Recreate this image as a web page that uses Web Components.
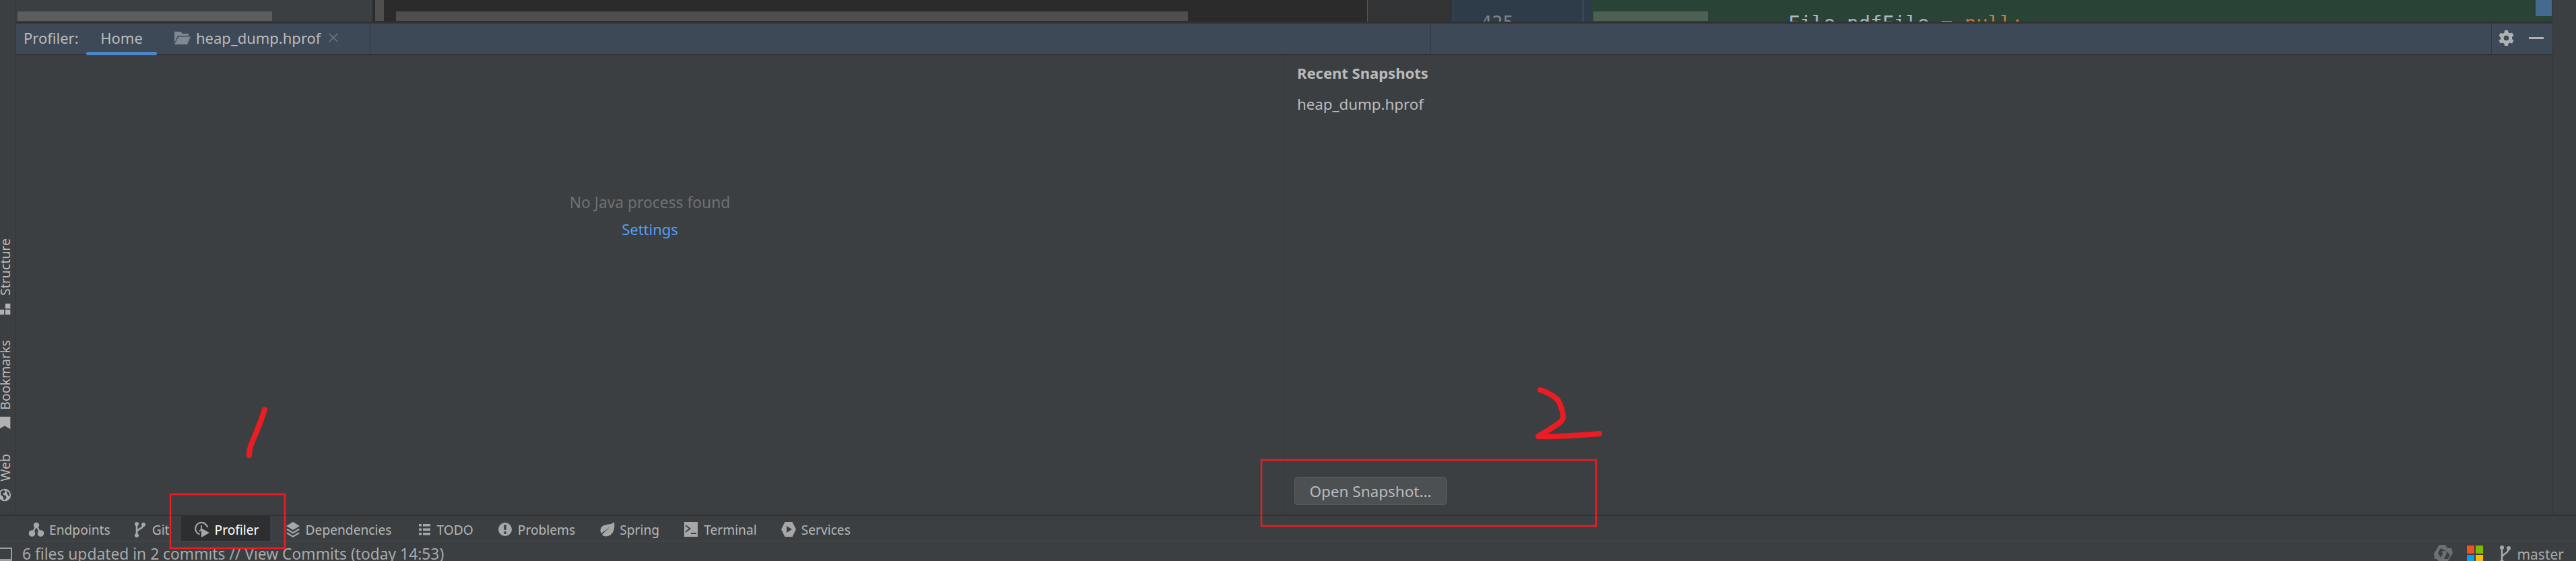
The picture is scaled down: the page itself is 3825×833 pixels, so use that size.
<!DOCTYPE html>
<html>
<head>
<meta charset="utf-8">
<title>Profiler</title>
<style>
  html, body { margin: 0; height: 100%; background: #3c3f41; overflow: hidden; }
  body { font-family: "Noto Sans", "Open Sans", sans-serif; color: #bbbbbb; }
</style>
</head>
<body>
<ide-window>
  <editor-strip slot="top"></editor-strip>
  <stripe-button slot="left" label="Structure" icon="structure"></stripe-button>
  <stripe-button slot="left" label="Bookmarks" icon="bookmark"></stripe-button>
  <stripe-button slot="left" label="Web" icon="web"></stripe-button>
  <tool-header slot="header"></tool-header>
  <profiler-home slot="content"></profiler-home>
  <tool-bar slot="toolbar">
    <tool-button icon="endpoints" style="--pad-l:42px;--pad-r:14px">Endpoints</tool-button>
    <tool-button icon="git" style="--pad-l:17px;--pad-r:17px">Git</tool-button>
    <tool-button icon="profiler" active style="--pad-l:19px;--pad-r:16px">Profiler</tool-button>
    <tool-button icon="layers" style="--pad-l:22px;--pad-r:18px">Dependencies</tool-button>
    <tool-button icon="todo" style="--pad-l:18px;--pad-r:17px">TODO</tool-button>
    <tool-button icon="problems" style="--pad-l:18px;--pad-r:16px">Problems</tool-button>
    <tool-button icon="spring" style="--pad-l:19px;--pad-r:17px">Spring</tool-button>
    <tool-button icon="terminal" style="--pad-l:18px;--pad-r:16px">Terminal</tool-button>
    <tool-button icon="services" style="--pad-l:19px;--pad-r:0px">Services</tool-button>
  </tool-bar>
  <status-bar slot="status"></status-bar>
</ide-window>
<ink-marks></ink-marks>

<script>
// shared icon paths, all drawn on a 24 box
const ICONS = {
  structure: '<path d="M13 2h9v9h-9zM13 13h9v9h-9zM1 13h10v9H1z"/>',
  bookmark: '<path d="M2 1h20v22l-10-6-10 6z"/>',
  web: '<path fill-rule="evenodd" d="M12 1a11 11 0 1 0 0 22 11 11 0 0 0 0-22zM5 6l5-3 3 2-1 3-3 1 1 3 4 1 1 4-3 4-2-1-1-5-4-3zM15 4l5 4 1 6-3-1-2-4z"/>',
  endpoints: '<g fill="none" stroke="currentColor" stroke-width="2.4"><path d="M12 6 6 18M12 6l6 12"/></g><circle cx="12" cy="6" r="4.2"/><circle cx="5.5" cy="18" r="4.8"/><circle cx="18.5" cy="18" r="4.8"/>',
  git: '<g fill="none" stroke="currentColor" stroke-width="2.6"><path d="M8 4v17M18 5c0 7-10 5-10 12"/></g><circle cx="8" cy="4" r="3"/><circle cx="18" cy="5" r="3"/><circle cx="8" cy="21" r="3"/>',
  profiler: '<g fill="none" stroke="currentColor" stroke-width="2.2"><path d="M8.5 19.5A9 9 0 1 1 20 9"/><path d="M11 6v6l-3 3" stroke-width="1.8"/></g><path d="M11 10.5 23 17l-12 7z"/>',
  layers: '<path d="M12 1 22 7l-10 6L2 7z"/><path d="M4 11l8 5 8-5 2 1.500-10 6-10-6zM4 16.500l8 5 8-5 2 1.500-10 6-10-6z"/>',
  todo: '<path d="M4 4h4v3.500H4zM10 4h11v3.500H10zM4 10.500h4V14H4zM10 10.500h11V14H10zM4 17h4v3.500H4zM10 17h11v3.500H10z"/>',
  problems: '<path fill-rule="evenodd" d="M12 2a10 10 0 1 0 0 20 10 10 0 0 0 0-20zM10 5.500h4l-.6 7.500h-2.800zM12 15a2 2 0 1 1 0 4 2 2 0 0 1 0-4z"/>',
  spring: '<path d="M23 1c1 8 0 15-5 19-4 3-9 3-12 1l-1-1C10 14 14 12 16 8 13 12 9 14 4 18 1 13 3 8 8 6c6-2 12-1 15-5z"/>',
  terminal: '<path fill-rule="evenodd" d="M2 1h20v22H2zM4 5v2.500L9 11l-5 3.500V17l8-6zM12 17v2h8v-2z"/>',
  services: '<path fill-rule="evenodd" d="M6.500 1h11L23 12l-5.500 11h-11L1 12zM9 7v10l8-5z"/>'
};

function icon(name) {
  return `<svg viewBox="0 0 24 24" fill="currentColor" aria-hidden="true">${ICONS[name] || ''}</svg>`;
}

class IdeWindow extends HTMLElement {
  constructor() {
    super();
    this.attachShadow({ mode: 'open' }).innerHTML = `
      <style>
        :host { display: flex; flex-direction: column; width: 3825px; height: 833px; overflow: hidden; }
        .top { flex: 0 0 32px; display: flex; }
        .middle { flex: none; display: flex; border-top: 3px solid #323232; height: 729px; }
        .left {
          flex: 0 0 23px; border-right: 1px solid #323538; overflow: hidden;
          display: flex; flex-direction: column; justify-content: flex-end; padding-bottom: 19px;
          margin-top: -3px; background: #3c3f41; position: relative;
        }
        .center { flex: 1; display: flex; flex-direction: column; min-width: 0; }
        .right { flex: 0 0 34px; border-left: 1px solid #323538; margin-top: -3px; background: #3c3f41; position: relative; }
        .toolbar { flex: 0 0 37px; border-top: 2px solid #323232; border-bottom: 1px solid #46494b; }
        .status { flex: 1; min-height: 0; }
      </style>
      <div class="top"><slot name="top"></slot></div>
      <div class="middle">
        <div class="left"><slot name="left"></slot></div>
        <div class="center">
          <slot name="header"></slot>
          <slot name="content"></slot>
        </div>
        <div class="right"></div>
      </div>
      <div class="toolbar"><slot name="toolbar"></slot></div>
      <div class="status"><slot name="status"></slot></div>
    `;
  }
}

// sliver of the editor still visible above the tool window
class EditorStrip extends HTMLElement {
  constructor() {
    super();
    this.attachShadow({ mode: 'open' }).innerHTML = `
      <style>
        :host { display: flex; width: 100%; height: 32px; overflow: hidden; }
        .seg { flex: none; height: 32px; display: flex; align-items: flex-start; overflow: hidden; box-sizing: border-box; }
        .thumb { flex: none; margin-top: 17px; height: 14px; }
        .code { font: 29px/1 "DejaVu Sans Mono", "Liberation Mono", monospace; color: #a9b7c6; white-space: pre; padding-top: 20px; }
        .code b { font-weight: normal; color: #cc7832; }
        .num { font: 27px/1 "DejaVu Sans Mono", monospace; color: #7d8289; padding: 20px 0 0 41px; }
      </style>
      <div class="seg" style="width:24px;border-right:1px solid #323538;background:#3c3f41"></div>
      <div class="seg" style="width:529px;background:#3c3f41">
        <div class="thumb" style="margin-left:2px;width:378px;background:#5b5d5f"></div>
      </div>
      <div class="seg" style="width:1477px;background:#2b2b2b;padding-left:4px">
        <div style="flex:none;width:13px;height:31px;background:#4e4e4e"></div>
        <div class="thumb" style="margin-left:18px;width:1176px;background:#4e4e4e"></div>
      </div>
      <div class="seg" style="width:127px;background:#313335;border-left:1px solid #555"></div>
      <div class="seg" style="width:194px;background:#2e3b49;border-left:1px solid #3a5a7c;border-right:1px solid #666">
        <div class="num">425</div>
      </div>
      <div class="seg" style="width:12px;background:#2e3b49"></div>
      <div class="seg" style="width:1426px;background:#294436;padding-left:3px">
        <div class="thumb" style="width:170px;background:#4c6152"></div>
        <div class="code" style="margin-left:119px">File pdfFile = <b>null;</b></div>
        <div style="flex:none;margin-left:auto;width:24px;height:24px;background:#456a90"></div>
      </div>
      <div class="seg" style="flex:1;background:#3c3f41;border-left:1px solid #323538"></div>
    `;
  }
}

class ToolHeader extends HTMLElement {
  constructor() {
    super();
    this.attachShadow({ mode: 'open' }).innerHTML = `
      <style>
        :host {
          display: flex; align-items: stretch; height: 47px; box-sizing: border-box; flex: none;
          background: #3d4957; border-bottom: 2px solid #323232; font-size: 22px; color: #bbbbbb;
        }
        .tabs { flex: 0 0 525px; display: flex; }
        .title { flex: 0 0 104px; padding-left: 11px; line-height: 42px; box-sizing: border-box; white-space: nowrap; }
        .tab { flex: none; position: relative; display: flex; align-items: center; height: 45px; padding-bottom: 3px; box-sizing: border-box; }
        .home { width: 105px; justify-content: center; }
        .home::after {
          content: ""; position: absolute; left: 0; right: 0; bottom: -2px; height: 5px;
          background: #4a88c7; border-radius: 3px;
        }
        .file { margin-left: 26px; gap: 8px; }
        .file svg { width: 24px; height: 19px; color: #7f8791; }
        .file .close { width: 14px; height: 14px; margin-left: 4px; color: #6f7883; }
        .split { flex: 0 0 1px; background: #323940; }
        .cell { flex: 0 0 1574px; }
        .tools { flex: 1; display: flex; align-items: center; padding-bottom: 3px; box-sizing: border-box; }
        .gear { flex: none; width: 23px; height: 23px; margin-left: 10px; color: #afb1b3; }
        .min { flex: none; width: 22px; height: 3px; margin-left: 22px; background: #afb1b3; }
      </style>
      <div class="tabs">
        <div class="title">Profiler:</div>
        <div class="tab home">Home</div>
        <div class="tab file">
          <svg viewBox="0 0 24 19" fill="currentColor"><path d="M0 0h9l3 3h9v3H5L0 17zM6 7.500h18L19 19H0z"/></svg>
          <span>heap_dump.hprof</span>
          <svg class="close" viewBox="0 0 15 15" fill="none" stroke="currentColor" stroke-width="1.600"><path d="M1 1l13 13M14 1 1 14"/></svg>
        </div>
      </div>
      <div class="split"></div>
      <div class="cell"></div>
      <div class="split"></div>
      <div class="cell"></div>
      <div class="split"></div>
      <div class="tools">
        <svg class="gear" viewBox="0 0 24 24" fill="currentColor">
          <path fill-rule="evenodd" d="M9.500 0h5l.8 3.500 2.300 1.300 3.400-1.100 2.500 4.300-2.600 2.400v3.200l2.600 2.400-2.500 4.300-3.400-1.100-2.300 1.300-.8 3.500h-5l-.8-3.500-2.300-1.300-3.400 1.100L.5 16.300l2.600-2.400v-3.200L.5 8.300 3 4l3.400 1.100 2.300-1.300zM12 8a4 4 0 1 0 0 8 4 4 0 0 0 0-8z"/>
        </svg>
        <div class="min"></div>
      </div>
    `;
  }
}

class ProfilerHome extends HTMLElement {
  constructor() {
    super();
    this.attachShadow({ mode: 'open' }).innerHTML = `
      <style>
        :host { display: flex; flex: 1; min-height: 0; font-size: 22px; }
        .procs {
          flex: 0 0 1883px; border-right: 1px solid #323538; box-sizing: border-box;
          display: flex; flex-direction: column; align-items: center; padding-top: 205px;
        }
        .empty { color: #6f7173; line-height: 28px; font-size: 22.800px; }
        .link { color: #589df6; line-height: 28px; margin-top: 11px; }
        .snaps { flex: 1; display: flex; flex-direction: column; padding: 11px 0 14px 19px; }
        h2 { margin: 0; font-size: 22px; font-weight: 700; line-height: 30px; color: #bbbbbb; }
        .item { margin-top: 17px; line-height: 30px; font-size: 22.300px; }
        button {
          margin-top: auto; margin-left: -4px; width: 226px; height: 42px; font: inherit; font-size: 22.500px; color: #bbbbbb;
          background: #4c5052; border: 1px solid #5e6060; border-radius: 5px; padding: 0;
        }
      </style>
      <div class="procs">
        <div class="empty">No Java process found</div>
        <div class="link">Settings</div>
      </div>
      <div class="snaps">
        <h2>Recent Snapshots</h2>
        <div class="item">heap_dump.hprof</div>
        <button>Open Snapshot...</button>
      </div>
    `;
  }
}

class StripeButton extends HTMLElement {
  connectedCallback() {
    this.attachShadow({ mode: 'open' }).innerHTML = `
      <style>
        :host {
          display: flex; flex-direction: column-reverse; align-items: flex-start;
          margin-top: 36px; font-size: 19.500px; color: #bbbbbb;
        }
        span { writing-mode: vertical-rl; transform: rotate(180deg); line-height: 17px; margin-left: -1px; }
        svg { width: 20px; height: 20px; margin: 10px 0 0 -3px; color: #afb1b3; }
      </style>
      ${icon(this.getAttribute('icon'))}
      <span>${this.getAttribute('label')}</span>
    `;
  }
}

class ToolBar extends HTMLElement {
  constructor() {
    super();
    this.attachShadow({ mode: 'open' }).innerHTML = `
      <style>
        :host { display: flex; height: 37px; }
      </style>
      <slot></slot>
    `;
  }
}

class ToolButton extends HTMLElement {
  connectedCallback() {
    this.attachShadow({ mode: 'open' }).innerHTML = `
      <style>
        :host {
          display: flex; align-items: center; gap: 7px; height: 37px; box-sizing: border-box;
          padding: 3px var(--pad-r) 0 var(--pad-l); font-size: 19.200px; color: #b4b6b8; white-space: nowrap;
        }
        :host([active]) { background: #2d2e30; color: #ffffff; }
        svg { width: 24px; height: 24px; color: #a5a7a9; flex: none; }
      </style>
      ${icon(this.getAttribute('icon'))}
      <slot></slot>
    `;
  }
}

class StatusBar extends HTMLElement {
  constructor() {
    super();
    this.attachShadow({ mode: 'open' }).innerHTML = `
      <style>
        :host { display: flex; align-items: flex-start; height: 30px; font-size: 22.800px; color: #a8aaac; white-space: nowrap; }
        .box { width: 18px; height: 20px; margin-top: 9px; box-sizing: border-box; border: 2px solid #9a9c9e; border-left: 0; border-bottom-width: 3px; }
        .msg { margin-left: 15px; line-height: 28px; margin-top: 5px; }
        .right { margin-left: auto; display: flex; align-items: flex-start; padding-right: 18px; }
        .spin { width: 28px; height: 26px; margin-top: 5px; color: #6d7072; }
        .ms { width: 24px; height: 26px; margin: 6px 0 0 21px; display: grid; grid-template-columns: 11px 11px; grid-auto-rows: 12px; gap: 2px; }
        .ms i:nth-child(1) { background: #f25022; }
        .ms i:nth-child(2) { background: #7fba00; }
        .ms i:nth-child(3) { background: #00a4ef; }
        .ms i:nth-child(4) { background: #ffb900; }
        .branch { width: 17px; height: 26px; margin: 6px 0 0 24px; color: #a5a7a9; }
        .name { margin-left: 9px; font-size: 21px; line-height: 28px; margin-top: 5px; color: #a8aaac; }
      </style>
      <div class="box"></div>
      <div class="msg">6 files updated in 2 commits // View Commits (today 14:53)</div>
      <div class="right">
        <svg class="spin" viewBox="0 0 28 26" fill="currentColor">
          <path d="M8 0h9l3 5h6l2 7-5 9-4 5H9L4 21H1L0 13zM10 5 6 12l4 7 3-5-1-5h6zM20 10l-5 11h6l3-5z"/>
        </svg>
        <div class="ms"><i></i><i></i><i></i><i></i></div>
        <svg class="branch" viewBox="0 0 17 26" fill="currentColor">
          <g fill="none" stroke="currentColor" stroke-width="2.500"><path d="M4 3v21M14 4c0 9-10 7-10 15"/></g>
          <circle cx="4" cy="3" r="3"/><circle cx="14" cy="4" r="3"/><circle cx="4" cy="24" r="3"/>
        </svg>
        <div class="name">master</div>
      </div>
    `;
  }
}

// red hand-drawn notes lying over the screenshot
class InkMarks extends HTMLElement {
  constructor() {
    super();
    this.attachShadow({ mode: 'open' }).innerHTML = `
      <style>
        :host { position: absolute; left: 0; top: 0; width: 3825px; height: 833px; pointer-events: none; }
        svg { display: block; }
        .rect { fill: none; stroke: #ed1c24; stroke-width: 2.500; }
        .pen { fill: none; stroke: #ed1c24; stroke-width: 8; stroke-linecap: round; stroke-linejoin: round; }
      </style>
      <svg width="3825" height="833" viewBox="0 0 3825 833">
        <rect class="rect" x="253" y="734" width="170" height="80"/>
        <rect class="rect" x="1873" y="683" width="497" height="98"/>
        <path class="pen" d="M393 608C387 628 379 645 373 660C371 665 370 670 370 676"/>
        <path class="pen" d="M2287 579C2298 582 2309 589 2314 595C2318 603 2321 612 2321 620C2320 627 2310 631 2302 637L2284 648C2310 649 2350 646 2375 644"/>
      </svg>
    `;
  }
}

customElements.define('ide-window', IdeWindow);
customElements.define('editor-strip', EditorStrip);
customElements.define('tool-header', ToolHeader);
customElements.define('profiler-home', ProfilerHome);
customElements.define('stripe-button', StripeButton);
customElements.define('tool-bar', ToolBar);
customElements.define('tool-button', ToolButton);
customElements.define('status-bar', StatusBar);
customElements.define('ink-marks', InkMarks);
</script>
</body>
</html>
